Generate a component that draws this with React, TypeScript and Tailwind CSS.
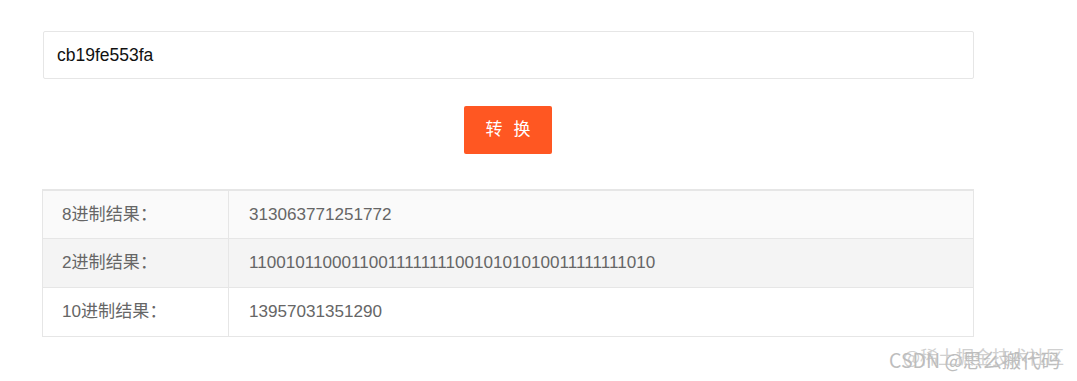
import React from "react";

const rows = [
  { label: "8进制结果：", value: "313063771251772", bg: "bg-[#fafafa]" },
  { label: "2进制结果：", value: "110010110001100111111110010101010011111111010", bg: "bg-[#f4f4f4]" },
  { label: "10进制结果：", value: "13957031351290", bg: "bg-white" },
];

export default function App() {
  return (
    <div
      className="relative w-[1077px] h-[381px] bg-white overflow-hidden"
      style={{ fontFamily: '"Liberation Sans", Arial, "Noto Sans CJK SC", sans-serif' }}
    >
      <div className="pt-[31px] pl-[42px] w-[974px] flex flex-col">
        <div className="ml-[1px] w-[931px] h-[48px] border border-[#e6e6e6] rounded-[2px] flex items-center pl-[13px] text-[17.5px] text-[#111]">
          cb19fe553fa
        </div>
        <div className="flex justify-center mt-[27px]">
          <button className="w-[88px] h-[48px] bg-[#ff5722] rounded-[2px] text-white text-[17px] tracking-[11px] pl-[11px] flex items-center justify-center">
            转换
          </button>
        </div>
        <div className="mt-[35px] w-[932px] border border-[#e6e6e6] border-t-2 text-[17.1px] text-[#666]">
          {rows.map((r, i) => (
            <div
              key={i}
              className={`flex ${r.bg} ${i > 0 ? "border-t border-[#e6e6e6] h-[49px]" : "h-[47px]"}`}
            >
              <div className="w-[186px] border-r border-[#e6e6e6] flex items-center pl-[19px]">
                {r.label}
              </div>
              <div className="flex-1 flex items-center pl-[20px]">{r.value}</div>
            </div>
          ))}
        </div>
      </div>
      <div
        className="absolute left-[903px] top-[343px] text-[18px] text-[#d0d0d0] whitespace-nowrap"
        style={{ fontFamily: '"Noto Sans CJK SC", sans-serif' }}
      >
        @稀土掘金技术社区
      </div>
      <div
        className="absolute left-[889px] top-[345px] text-[19.5px] text-[#bdbdbd] whitespace-nowrap"
        style={{ fontFamily: '"Noto Sans CJK SC", sans-serif' }}
      >
        CSDN @思么搬代码
      </div>
    </div>
  );
}
